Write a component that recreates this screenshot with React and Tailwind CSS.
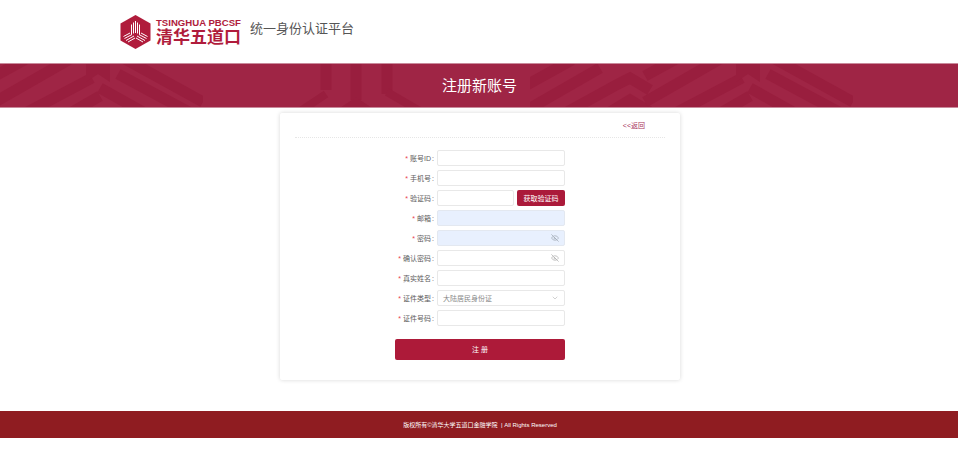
import React from "react";
import { EyeOff, ChevronDown } from "lucide-react";

const font = { fontFamily: '"Liberation Sans", "Noto Sans CJK SC", sans-serif' };
const DARK = "#991e3e";
const LIGHT = "#9f2545";

function Logo() {
  return (
    <svg width="31" height="34" viewBox="0 0 31 34" className="shrink-0">
      <polygon points="15.5,0 30.5,8.5 30.5,25.5 15.5,34 0.5,25.5 0.5,8.5" fill="#b01c3c" />
      <g stroke="#ffffff" strokeWidth="1" fill="none">
        <path d="M15.5 6V18M13.5 7.5V18.5M17.5 7.5V18.5M11.5 9.5V19.5M19.5 9.5V19.5" />
        <path d="M3.5 21.5L10 18M4.5 23.5L12 19.5M6 25.5L14 21M8 27L15 23" />
        <path d="M27.5 21.5L21 18M26.5 23.5L19 19.5M25 25.5L17 21M23 27L16 23" />
      </g>
    </svg>
  );
}

function Chevrons() {
  return (
    <g>
      <path
        d="M-5 12L26 -5M-5 38L70 -5M20 52L92 14M62 54L100 32M125 -5L203 38M118 10L200 54M100 24L150 52"
        stroke={DARK}
        strokeWidth="11"
        fill="none"
      />
      <path d="M86 -2H110V18L98 10L86 18Z" fill={DARK} />
    </g>
  );
}

function Pattern() {
  return (
    <svg width="958" height="45" viewBox="0 0 958 45" className="absolute left-0 top-0">
      <Chevrons />
      <rect x="203" y="0" width="117" height="45" fill={LIGHT} />
      <path d="M326 -2V26M356 -2V36M387 -2V30" stroke={DARK} strokeWidth="11" fill="none" />
      <path d="M296 50L326 30M338 50L356 38L374 50M387 28L425 50" stroke={DARK} strokeWidth="8" fill="none" />
      <path d="M525 22L572 -4M520 50L600 4M560 52L618 20L630 14L650 26M600 54L630 36L650 48" stroke={DARK} strokeWidth="11" fill="none" />
      <rect x="520" y="0" width="10" height="45" fill={LIGHT} />
      <g transform="translate(650 0)">
        <Chevrons />
      </g>
      <rect x="853" y="0" width="105" height="45" fill={LIGHT} />
    </svg>
  );
}

function Banner() {
  return (
    <div className="relative h-[45px] bg-[#9f2545] border-y border-[#c98a9b] flex items-center justify-center overflow-hidden pl-[1px]">
      <Pattern />
      <h1 className="relative text-[15px] leading-none text-white font-normal">注册新账号</h1>
    </div>
  );
}

function Label({ children }) {
  return (
    <div className="w-[142px] pr-[3px] flex justify-end items-center text-[7px] leading-none text-[#5c5c5c] whitespace-nowrap">
      <span className="text-[#e8434f] mr-[2px]">*</span>
      <span>{children}</span>
      <span className="ml-[1px]">:</span>
    </div>
  );
}

function Field({ filled, children }) {
  return (
    <div
      className={
        "flex-1 h-[16px] rounded-[2px] border flex items-center justify-end pr-[5px] " +
        (filled ? "bg-[#e8f0fe] border-[#e3e8f0]" : "bg-white border-[#e8e8e8]")
      }
    >
      {children}
    </div>
  );
}

function Row({ label, children }) {
  return (
    <div className="flex h-[16px] mb-[4px]">
      <Label>{label}</Label>
      <div className="w-[128px] flex">{children}</div>
    </div>
  );
}

export default function App() {
  return (
    <div className="w-[958px] h-[464px] bg-white overflow-hidden" style={font}>
      <header className="h-[63px] pl-[120px] flex items-center">
        <Logo />
        <div className="ml-[5px] w-[86px] flex flex-col text-[#b01c3c] mt-[1px]">
          <span className="text-[9.6px] leading-[11px] font-bold whitespace-nowrap">TSINGHUA PBCSF</span>
          <span className="text-[17px] leading-[19px] font-bold whitespace-nowrap">清华五道口</span>
        </div>
        <span className="ml-[8px] text-[13px] leading-none text-[#555555] -mt-[7px]">统一身份认证平台</span>
      </header>

      <Banner />

      <main className="w-[400px] h-[267px] ml-[280px] mt-[5px] bg-white rounded-[2px] shadow-[0_0_4px_rgba(0,0,0,0.16)] px-[15px]">
        <div className="h-[25px] border-b border-dotted border-[#e6e6e6] flex items-center justify-end pr-[20px]">
          <a className="text-[7px] leading-none text-[#a8345c]">&lt;&lt;返回</a>
        </div>
        <form className="pt-[12px]">
          <Row label="账号ID"><Field /></Row>
          <Row label="手机号"><Field /></Row>
          <Row label="验证码">
            <Field />
            <button type="button" className="ml-[3px] w-[48px] h-[16px] rounded-[2px] bg-[#ab1a3a] text-white text-[7px] leading-none">
              获取验证码
            </button>
          </Row>
          <Row label="邮箱"><Field filled /></Row>
          <Row label="密码">
            <Field filled><EyeOff size={8} color="#9aa3ad" /></Field>
          </Row>
          <Row label="确认密码">
            <Field><EyeOff size={8} color="#a8a8a8" /></Field>
          </Row>
          <Row label="真实姓名"><Field /></Row>
          <Row label="证件类型">
            <div className="flex-1 h-[16px] rounded-[2px] border border-[#e8e8e8] bg-white flex items-center justify-between pl-[5px] pr-[5px]">
              <span className="text-[7px] leading-none text-[#888888]">大陆居民身份证</span>
              <ChevronDown size={8} color="#bbbbbb" />
            </div>
          </Row>
          <Row label="证件号码"><Field /></Row>
          <button type="button" className="block ml-[100px] mt-[13px] w-[170px] h-[21px] rounded-[2px] bg-[#ad1a39] text-white text-[7px] leading-none">
            注 册
          </button>
        </form>
      </main>

      <footer className="mt-[31px] h-[27px] bg-[#8f1c21] flex items-center justify-center pl-[2px] text-[6px] leading-none text-white whitespace-nowrap">
        版权所有©清华大学五道口金融学院 &nbsp;| All Rights Reserved
      </footer>
    </div>
  );
}
